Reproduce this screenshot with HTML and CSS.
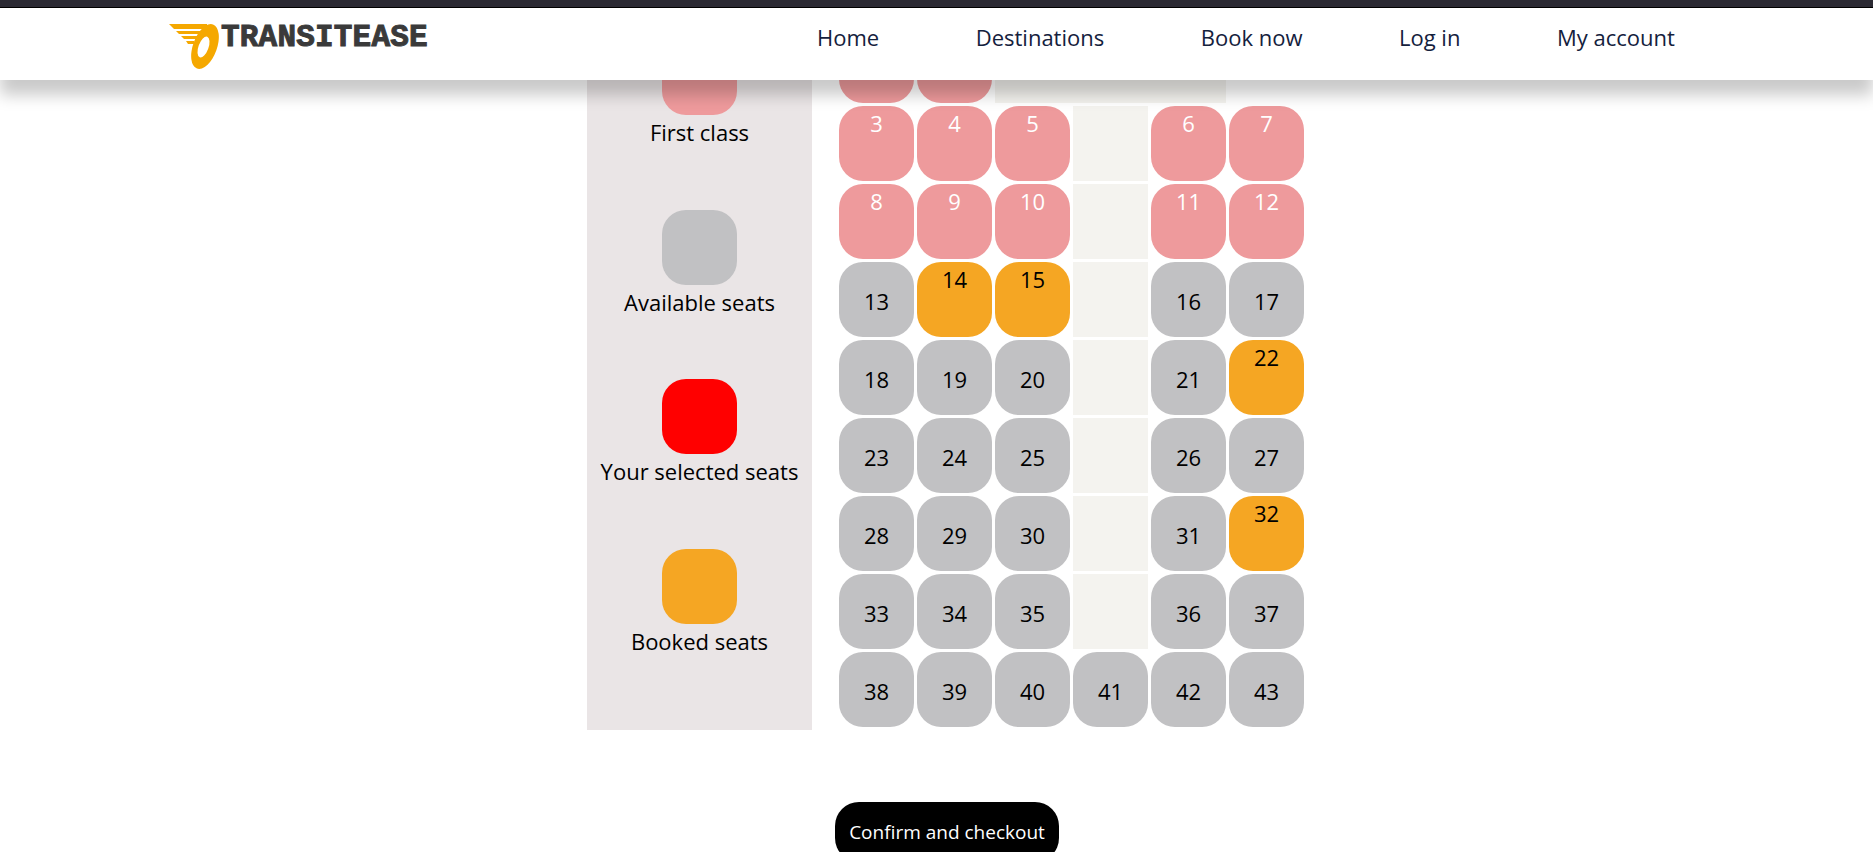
FILE: index.html
```html
<!DOCTYPE html>
<html lang="en">
<head>
<meta charset="utf-8">
<title>TransitEase seats</title>
<link rel="stylesheet" href="styles.css">
</head>
<body>
<header class="site-header">
  <div class="topbar"></div>
  <div class="navbar">
    <a class="logo" href="#">
      <svg class="logo-mark" viewBox="0 0 56 46" width="56" height="46" aria-hidden="true">
        <path d="M0 1H38V6H5Z" fill="#f5a800"/>
        <path d="M7 8H31V11H10Z" fill="#f5a800"/>
        <path d="M12 13H28V16H15Z" fill="#f5a800"/>
        <path d="M17 18H25V21H19Z" fill="#f5a800"/>
        <ellipse cx="36" cy="23.5" rx="12" ry="23.5" transform="rotate(20 36 23.5)" fill="#f5a800"/>
        <ellipse cx="34.5" cy="24" rx="5" ry="11" transform="rotate(20 34.5 24)" fill="#fff"/>
      </svg>
      <span class="logo-text">TRANSITEASE</span>
    </a>
    <nav class="nav">
      <a href="#">Home</a>
      <a href="#">Destinations</a>
      <a href="#">Book now</a>
      <a href="#">Log in</a>
      <a href="#">My account</a>
    </nav>
  </div>
</header>

<main class="page">
  <section class="booking">
    <aside class="legend">
      <div class="legend-item"><div class="swatch pink"></div><p>First class</p></div>
      <div class="legend-item"><div class="swatch grey"></div><p>Available seats</p></div>
      <div class="legend-item"><div class="swatch red"></div><p>Your selected seats</p></div>
      <div class="legend-item"><div class="swatch orange"></div><p>Booked seats</p></div>
    </aside>
    <div class="seats">
      <div class="seat pink"></div><div class="seat pink"></div><div class="aisle wide"></div><div class="empty"></div>
      <div class="seat pink">3</div><div class="seat pink">4</div><div class="seat pink">5</div><div class="aisle"></div><div class="seat pink">6</div><div class="seat pink">7</div>
      <div class="seat pink">8</div><div class="seat pink">9</div><div class="seat pink">10</div><div class="aisle"></div><div class="seat pink">11</div><div class="seat pink">12</div>
      <div class="seat grey">13</div><div class="seat orange">14</div><div class="seat orange">15</div><div class="aisle"></div><div class="seat grey">16</div><div class="seat grey">17</div>
      <div class="seat grey">18</div><div class="seat grey">19</div><div class="seat grey">20</div><div class="aisle"></div><div class="seat grey">21</div><div class="seat orange">22</div>
      <div class="seat grey">23</div><div class="seat grey">24</div><div class="seat grey">25</div><div class="aisle"></div><div class="seat grey">26</div><div class="seat grey">27</div>
      <div class="seat grey">28</div><div class="seat grey">29</div><div class="seat grey">30</div><div class="aisle"></div><div class="seat grey">31</div><div class="seat orange">32</div>
      <div class="seat grey">33</div><div class="seat grey">34</div><div class="seat grey">35</div><div class="aisle"></div><div class="seat grey">36</div><div class="seat grey">37</div>
      <div class="seat grey">38</div><div class="seat grey">39</div><div class="seat grey">40</div><div class="seat grey">41</div><div class="seat grey">42</div><div class="seat grey">43</div>
    </div>
  </section>
  <div class="actions"><button class="checkout" type="button">Confirm and checkout</button></div>
</main>
</body>
</html>
```
FILE: styles.css
```css
* { box-sizing: border-box; }
html, body { margin: 0; height: 852px; overflow: hidden; background: #fff; }
body { font-family: "Open Sans", "Noto Sans", sans-serif; color: #000; }

.site-header { position: fixed; top: 0; left: 0; right: 0; z-index: 10; box-shadow: 0 15px 15px rgba(0,0,0,.21); }
.topbar { height: 8px; background: #2b2a33; border-bottom: 1px solid #000; }
.navbar { height: 72px; background: #fff; display: flex; align-items: flex-start; padding-left: 169px; }
.logo { display: flex; align-items: flex-start; text-decoration: none; width: 648px; padding-top: 15px; }
.logo-mark { flex: none; margin-right: -4px; }
.logo-text { font-family: "Liberation Mono", monospace; font-weight: 700; font-size: 31px; line-height: 30px; letter-spacing: .2px; color: #3a3a3a; -webkit-text-stroke: 1px #3a3a3a; }
.nav { display: flex; gap: 96.5px; padding-top: 14px; }
.nav a { font-size: 22px; line-height: 30px; color: #14213d; text-decoration: none; }

.page { padding: 25px 0 0 587px; }
.booking { display: flex; gap: 27px; width: 720px; }
.legend { width: 225px; height: 705px; background: #eae5e6; padding-top: 15px; display: flex; flex-direction: column; gap: 67.7px; }
.legend-item { display: flex; flex-direction: column; align-items: center; height: 102px; }
.legend-item p { margin: 2px 0 0; font-size: 22px; line-height: 30px; white-space: nowrap; }
.swatch { width: 75px; height: 75px; border-radius: 24px; flex: none; }

.seats { display: grid; grid-template-columns: repeat(6, 75px); grid-auto-rows: 75px; gap: 3px; padding: 3px 0; align-content: start; }
.seat { border-radius: 24px; font-size: 22px; line-height: 30px; text-align: center; }
.seat.grey { background: #c1c1c3; padding-top: 24px; }
.seat.pink { padding-top: 2px; color: #fff; }
.seat.orange { padding-top: 2px; }
.aisle { background: #f4f3ef; }
.aisle.wide { grid-column: span 3; }

.pink { background: #ee9a9c; }
.grey { background: #c1c1c3; }
.red { background: #ff0000; }
.orange { background: #f5a623; }

.actions { margin-top: 72px; padding-left: 248px; }
.checkout { width: 224px; height: 60px; border: 0; border-radius: 24px; background: #000; color: #fff; font: 19px "Open Sans", "Noto Sans", sans-serif; padding: 0; }
```
